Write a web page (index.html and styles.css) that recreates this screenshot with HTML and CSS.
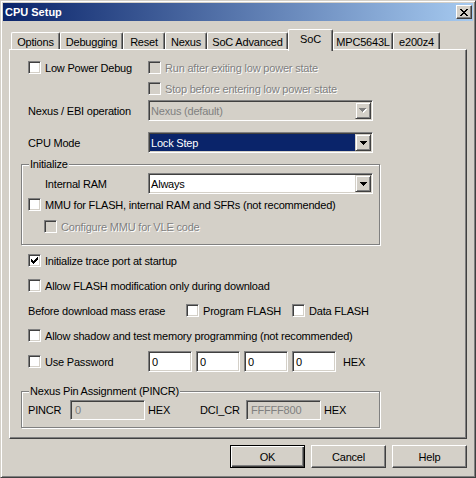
FILE: index.html
```html
<!DOCTYPE html>
<html lang="en">

<head>
    <meta charset="UTF-8" />
    <title>CPU Setup</title>
    <link rel="stylesheet" href="styles.css">
</head>

<body>
    <div class="window">
        <div class="titlebar">
            <span class="title">CPU Setup</span>
            <span class="close-btn">
                <svg width="8" height="7" viewBox="0 0 8 7" shape-rendering="crispEdges">
                    <path d="M0 0h2v1h-2zM6 0h2v1h-2zM1 1h2v1h-2zM5 1h2v1h-2zM2 2h4v1h-4zM3 3h2v1h-2zM2 4h4v1h-4zM1 5h2v1h-2zM5 5h2v1h-2zM0 6h2v1h-2zM6 6h2v1h-2z" fill="#000" />
                </svg>
            </span>
        </div>

        <div class="tabs">
            <div class="tab tab-options">Options</div>
            <div class="tab tab-debugging">Debugging</div>
            <div class="tab tab-reset">Reset</div>
            <div class="tab tab-nexus">Nexus</div>
            <div class="tab tab-advanced">SoC Advanced</div>
            <div class="tab tab-soc active">SoC</div>
            <div class="tab tab-mpc">MPC5643L</div>
            <div class="tab tab-core">e200z4</div>
        </div>

        <div class="page">
            <div class="row">
                <label class="check lbl"><span class="box"></span>Low Power Debug</label>
                <label class="check disabled"><span class="box"></span>Run after exiting low power state</label>
            </div>
            <div class="row">
                <span class="lbl"></span>
                <label class="check disabled"><span class="box"></span>Stop before entering low power state</label>
            </div>
            <div class="row row-ebi">
                <span class="lbl">Nexus / EBI operation</span>
                <div class="combo disabled">
                    <span class="combo-text">Nexus (default)</span>
                    <span class="drop">
                        <svg width="8" height="5" viewBox="0 0 8 5" shape-rendering="crispEdges">
                            <path d="M1 1h7v1h-7zM2 2h5v1h-5zM3 3h3v1h-3zM4 4h1v1h-1z" fill="#fff" />
                            <path d="M0 0h7v1h-7zM1 1h5v1h-5zM2 2h3v1h-3zM3 3h1v1h-1z" fill="#808080" />
                        </svg>
                    </span>
                </div>
            </div>
            <div class="row row-mode">
                <span class="lbl">CPU Mode</span>
                <div class="combo">
                    <span class="combo-text selected">Lock Step</span>
                    <span class="drop">
                        <svg width="7" height="4" viewBox="0 0 7 4" shape-rendering="crispEdges">
                            <path d="M0 0h7v1h-7zM1 1h5v1h-5zM2 2h3v1h-3zM3 3h1v1h-1z" fill="#000" />
                        </svg>
                    </span>
                </div>
            </div>

            <div class="group group-init">
                <span class="legend">Initialize</span>
                <div class="row row-ram">
                    <span class="lbl indent">Internal RAM</span>
                    <div class="combo">
                        <span class="combo-text">Always</span>
                        <span class="drop">
                            <svg width="7" height="4" viewBox="0 0 7 4" shape-rendering="crispEdges">
                                <path d="M0 0h7v1h-7zM1 1h5v1h-5zM2 2h3v1h-3zM3 3h1v1h-1z" fill="#000" />
                            </svg>
                        </span>
                    </div>
                </div>
                <div class="row">
                    <label class="check"><span class="box"></span>MMU for FLASH, internal RAM and SFRs (not recommended)</label>
                </div>
                <div class="row row-vle">
                    <label class="check disabled indent"><span class="box"></span>Configure MMU for VLE code</label>
                </div>
            </div>

            <div class="row row-trace">
                <label class="check">
                    <span class="box">
                        <svg width="9" height="9" viewBox="0 0 9 9" shape-rendering="crispEdges">
                            <path d="M1 3h1v3h-1zM2 4h1v3h-1zM3 5h1v3h-1zM4 4h1v3h-1zM5 3h1v3h-1zM6 2h1v3h-1zM7 1h1v3h-1z" fill="#000" />
                        </svg>
                    </span>Initialize trace port at startup
                </label>
            </div>
            <div class="row row-spaced">
                <label class="check"><span class="box"></span>Allow FLASH modification only during download</label>
            </div>
            <div class="row row-spaced">
                <span class="lbl-wide">Before download mass erase</span>
                <label class="check erase-program"><span class="box"></span>Program FLASH</label>
                <label class="check"><span class="box"></span>Data FLASH</label>
            </div>
            <div class="row row-spaced">
                <label class="check"><span class="box"></span>Allow shadow and test memory programming (not recommended)</label>
            </div>
            <div class="row row-password">
                <label class="check lbl"><span class="box"></span>Use Password</label>
                <div class="fields">
                    <span class="field">0</span>
                    <span class="field">0</span>
                    <span class="field">0</span>
                    <span class="field">0</span>
                </div>
                <span class="hex">HEX</span>
            </div>

            <div class="group group-pins">
                <span class="legend">Nexus Pin Assignment (PINCR)</span>
                <div class="row row-pins">
                    <span class="pin-lbl">PINCR</span>
                    <span class="field wide disabled">0</span>
                    <span class="pin-hex">HEX</span>
                    <span class="dci-lbl">DCI_CR</span>
                    <span class="field wide disabled">FFFFF800</span>
                    <span class="pin-hex">HEX</span>
                </div>
            </div>
        </div>

        <div class="buttons">
            <button type="button" class="btn default">OK</button>
            <button type="button" class="btn">Cancel</button>
            <button type="button" class="btn">Help</button>
        </div>
    </div>
</body>

</html>
```

FILE: styles.css
```css
body {
    margin: 0;
    background-color: #d4d0c8;
    font-family: "Liberation Sans", Arial, sans-serif;
    font-size: 11px;
    letter-spacing: -0.2px;
    color: #000;
}

.window {
    width: 476px;
    height: 478px;
    box-sizing: border-box;
    background-color: #d4d0c8;
    border: 1px solid;
    border-color: #d4d0c8 #404040 #404040 #d4d0c8;
    box-shadow: inset 1px 1px #fff, inset -1px -1px #808080;
    padding: 2px;
}

/* title bar */

.titlebar {
    height: 18px;
    display: flex;
    align-items: center;
    justify-content: space-between;
    padding: 0 1px 0 2px;
    background: linear-gradient(to right, #0a246a, #a6caf0);
}

.title {
    color: #fff;
    font-weight: bold;
    letter-spacing: 0;
}

.close-btn {
    width: 16px;
    height: 14px;
    box-sizing: border-box;
    display: flex;
    align-items: center;
    justify-content: center;
    background-color: #d4d0c8;
    border: 1px solid;
    border-color: #fff #404040 #404040 #fff;
    box-shadow: inset -1px -1px #808080;
}

/* tabs */

.tabs {
    height: 20px;
    margin-top: 8px;
    padding-left: 8px;
    display: flex;
    align-items: flex-end;
    position: relative;
    z-index: 1;
}

.tab {
    height: 17px;
    box-sizing: border-box;
    display: flex;
    align-items: center;
    justify-content: center;
    white-space: nowrap;
    border-top: 1px solid #fff;
    border-left: 1px solid #fff;
    border-right: 1px solid #404040;
    border-radius: 2px 2px 0 0;
    box-shadow: inset -1px 0 #808080;
    background-color: #d4d0c8;
    padding-top: 1px;
}

.tab.active {
    height: 22px;
    margin-bottom: -2px;
    padding: 0 0 3px;
}

.tab-options { width: 49px; }
.tab-debugging { width: 63px; }
.tab-reset { width: 42px; }
.tab-nexus { width: 42px; }
.tab-advanced { width: 81px; }
.tab-soc { width: 45px; }
.tab-mpc { width: 60px; }
.tab-core { width: 47px; }

/* tab page */

.page {
    height: 390px;
    margin: 0 6px;
    box-sizing: border-box;
    border: 1px solid;
    border-color: #fff #404040 #404040 #fff;
    box-shadow: inset -1px -1px #808080;
    padding: 7px 0 0 18px;
}

.row {
    height: 21px;
    display: flex;
    align-items: center;
}

.row-ebi { margin-top: 1px; }
.row-mode { margin-top: 11px; }
.row-ram { margin-top: 2px; }
.row-vle { margin-top: 1px; }
.row-trace { margin-top: 5px; }
.row-spaced { margin-top: 4px; }
.row-password { margin-top: 5px; }

.row-pins {
    height: 20px;
    margin-top: 2px;
}

.lbl {
    width: 120px;
    flex: none;
}

.lbl.indent {
    width: 103px;
    margin-left: 17px;
}

.lbl-wide {
    width: 158px;
    flex: none;
}

.check {
    display: flex;
    align-items: center;
    gap: 4px;
    white-space: nowrap;
}

.check.indent {
    margin-left: 16px;
}

.box {
    width: 13px;
    height: 13px;
    flex: none;
    box-sizing: border-box;
    display: flex;
    align-items: center;
    justify-content: center;
    background-color: #fff;
    border: 1px solid;
    border-color: #808080 #fff #fff #808080;
    box-shadow: inset 1px 1px #404040, inset -1px -1px #d4d0c8;
}

.disabled {
    color: #808080;
    text-shadow: 1px 1px 0 #fff;
}

.check.disabled .box {
    background-color: #d4d0c8;
}

.erase-program {
    width: 106px;
    flex: none;
}

/* drop-down lists */

.combo {
    width: 225px;
    height: 21px;
    box-sizing: border-box;
    display: flex;
    padding: 1px;
    background-color: #fff;
    border: 1px solid;
    border-color: #808080 #fff #fff #808080;
    box-shadow: inset 1px 1px #404040, inset -1px -1px #d4d0c8;
}

.combo.disabled {
    background-color: #d4d0c8;
    text-shadow: none;
}

.combo-text {
    flex: 1;
    display: flex;
    align-items: center;
    padding-left: 1px;
}

.combo-text.selected {
    background-color: #0a246a;
    color: #fff;
}

.drop {
    width: 16px;
    height: 17px;
    flex: none;
    box-sizing: border-box;
    display: flex;
    align-items: center;
    justify-content: center;
    background-color: #d4d0c8;
    border: 1px solid;
    border-color: #d4d0c8 #404040 #404040 #d4d0c8;
    box-shadow: inset 1px 1px #fff, inset -1px -1px #808080;
}

/* group boxes */

.group {
    width: 359px;
    box-sizing: border-box;
    margin-left: -7px;
    padding: 0 0 7px 6px;
    border: 1px solid #808080;
    box-shadow: inset 1px 1px #fff, 1px 1px #fff;
}

.group-init { margin-top: 11px; }
.group-pins { margin-top: 19px; }

.legend {
    display: block;
    width: fit-content;
    height: 13px;
    line-height: 13px;
    margin: -7px 0 0 1px;
    padding: 0 1px;
    background-color: #d4d0c8;
}

/* edit fields */

.fields {
    display: flex;
    gap: 4px;
}

.field {
    width: 44px;
    height: 21px;
    box-sizing: border-box;
    display: flex;
    align-items: center;
    padding-left: 3px;
    background-color: #fff;
    border: 1px solid;
    border-color: #808080 #fff #fff #808080;
    box-shadow: inset 1px 1px #404040, inset -1px -1px #d4d0c8;
}

.field.wide {
    width: 75px;
    height: 20px;
    padding-left: 4px;
}

.field.disabled {
    background-color: #d4d0c8;
    text-shadow: none;
}

.hex {
    margin-left: 7px;
}

.pin-lbl {
    width: 42px;
}

.pin-hex {
    width: 52px;
    margin-left: 3px;
}

.dci-lbl {
    width: 46px;
}

/* dialog buttons */

.buttons {
    display: flex;
    justify-content: flex-end;
    gap: 6px;
    margin-top: 6px;
    padding-right: 6px;
}

.btn {
    width: 75px;
    height: 23px;
    box-sizing: border-box;
    padding: 0;
    font-family: inherit;
    font-size: 11px;
    letter-spacing: inherit;
    color: #000;
    background-color: #d4d0c8;
    border: 1px solid;
    border-color: #fff #404040 #404040 #fff;
    box-shadow: inset -1px -1px #808080;
}

.btn.default {
    border-color: #000;
    box-shadow: inset 1px 1px #fff, inset -1px -1px #404040, inset -2px -2px #808080;
}
```
